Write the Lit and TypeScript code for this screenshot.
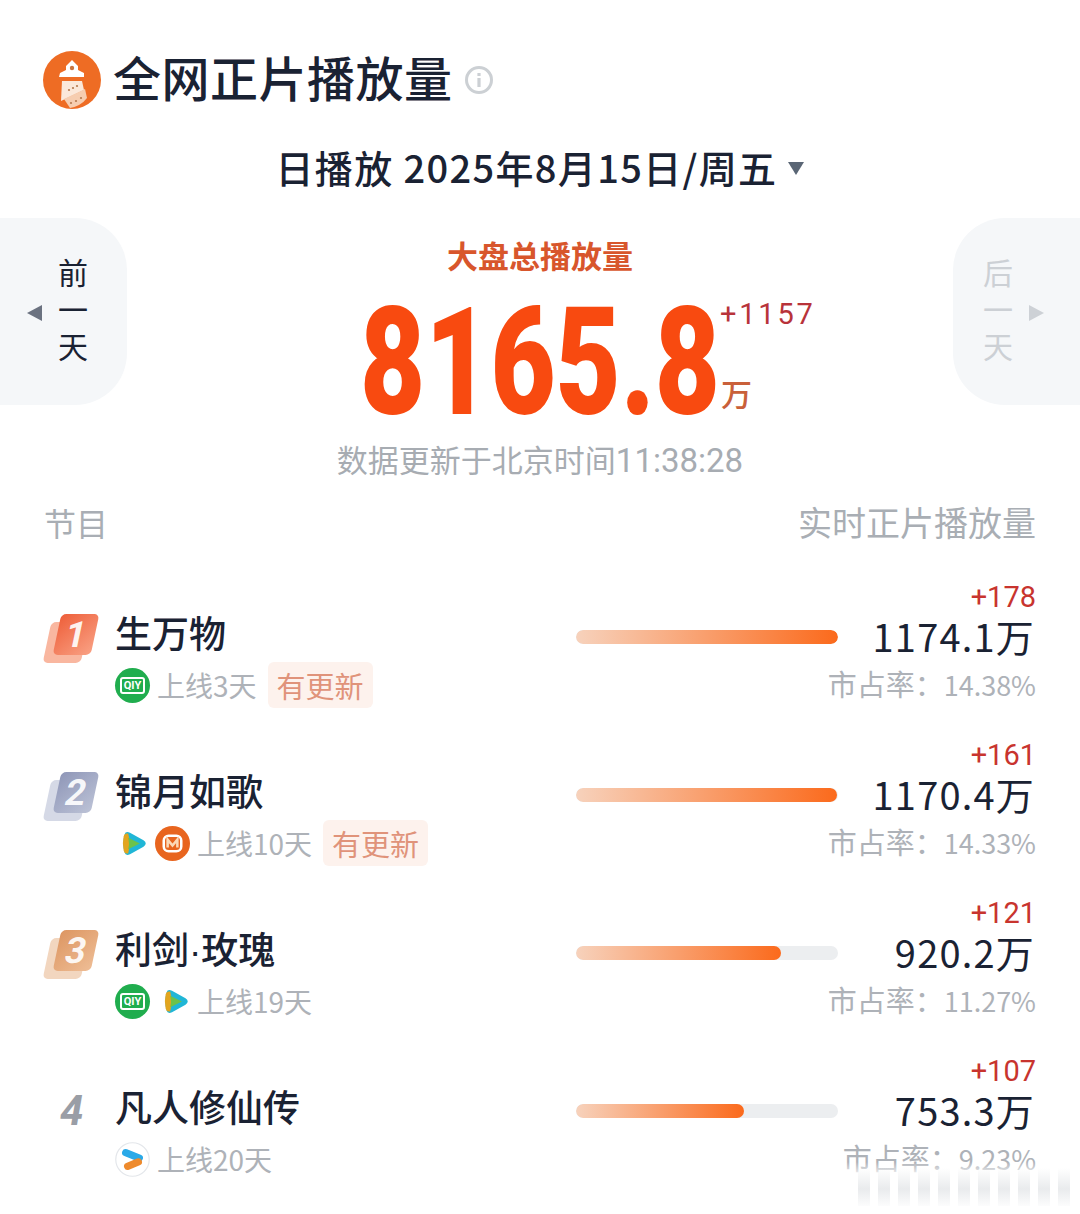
import { LitElement, html, css, svg } from "lit";
import { customElement } from "lit/decorators.js";

type Src = "iqiyi" | "tencent" | "mango" | "youku";
interface Row {
  rank: number; title: string; srcs: Src[]; meta: string; tag: boolean;
  delta: string; value: string; share: string; pct: number;
}

const rows: Row[] = [
  { rank: 1, title: "生万物", srcs: ["iqiyi"], meta: "上线3天", tag: true, delta: "+178", value: "1174.1", share: "14.38%", pct: 100 },
  { rank: 2, title: "锦月如歌", srcs: ["tencent", "mango"], meta: "上线10天", tag: true, delta: "+161", value: "1170.4", share: "14.33%", pct: 99.6 },
  { rank: 3, title: "利剑·玫瑰", srcs: ["iqiyi", "tencent"], meta: "上线19天", tag: false, delta: "+121", value: "920.2", share: "11.27%", pct: 78.4 },
  { rank: 4, title: "凡人修仙传", srcs: ["youku"], meta: "上线20天", tag: false, delta: "+107", value: "753.3", share: "9.23%", pct: 64.2 },
];

const srcIcon = (s: Src) => {
  if (s === "iqiyi")
    return html`<span class="iqiyi"><span class="qiy">QIY</span></span>`;
  if (s === "tencent")
    return html`<svg class="ic-t" viewBox="0 0 30 30">
      <path d="M4 5 Q1 15 4 25 Q5 29 10 27 L25 18.5 Q30 15 25 11.5 L10 3 Q5 1 4 5Z" fill="#20b6d6"/>
      <path d="M3 7 Q1 15 3 23 Q4 27 8 26 Q11 15 8 4 Q4 3 3 7Z" fill="#e2a51f"/>
      <path d="M8 8.5 L21 15 L8 21.5 Q10 15 8 8.5Z" fill="#6cc24a"/>
    </svg>`;
  if (s === "mango")
    return html`<svg class="ic-m" viewBox="0 0 36 36">
      <circle cx="18" cy="18" r="18" fill="#e8651f"/>
      <rect x="9" y="10" width="18" height="16" rx="5" fill="none" stroke="#fff" stroke-width="2.6"/>
      <path d="M13 22 V14 L18 20 L23 14 V22" fill="none" stroke="#fbd9b8" stroke-width="2.6"/>
    </svg>`;
  return html`<svg class="ic-m" viewBox="0 0 36 36">
    <circle cx="18" cy="18" r="17.2" fill="#fff" stroke="#e3e6ea" stroke-width="1.2"/>
    <path d="M11 11 L25 16.5" stroke="#2aa9e8" stroke-width="7.5" stroke-linecap="round"/>
    <path d="M13 25 L24 20.5" stroke="#ee8a2c" stroke-width="7.5" stroke-linecap="round"/>
  </svg>`;
};

const tower = svg`
  <circle cx="29" cy="29" r="29" fill="#ee6c24"/>
  <path d="M17 22 L23 19 L23 15 L29 9 L35 15 L35 19 L41 22 L41 26 L16 26Z" fill="#fff"/>
  <circle cx="29" cy="17" r="2.2" fill="#c9743f"/>
  <path d="M19 30 H39 L41 39 L18 50 Z" fill="#fbe8da"/>
  <path d="M21 48 L42 38 L44 47 Q38 55 27 57 Z" fill="#f6cdb0"/>
  <g fill="#b57a4f"><circle cx="26" cy="39" r="1.1"/><circle cx="30" cy="37" r="1.1"/><circle cx="34" cy="35" r="1.1"/><circle cx="28" cy="52" r="1.1"/><circle cx="33" cy="50" r="1.1"/><circle cx="38" cy="47" r="1.1"/></g>
`;

@customElement("app-root")
export class AppRoot extends LitElement {
  static styles = css`
    :host {
      display: block; width: 1080px; height: 1214px; overflow: hidden; position: relative;
      background: #fff; color: #1a2233;
      font-family: "Noto Sans CJK SC", "Noto Sans", sans-serif;
    }
    .head { display: flex; align-items: center; padding: 50px 0 0 43px; height: 60px; }
    .logo { width: 58px; height: 58px; flex: none; }
    .title { font-size: 48px; line-height: 60px; margin: -8px 0 0 12px; font-weight: 500; white-space: nowrap; letter-spacing: 0.5px; }
    .info { width: 30px; height: 30px; margin-left: 11px; flex: none; }
    .date {
      display: flex; justify-content: center; align-items: center; gap: 11px;
      margin-top: 27px; height: 60px; font-size: 38px; line-height: 50px; font-weight: 500; white-space: nowrap; letter-spacing: 1.35px;
    }
    .date i { display: block; width: 0; height: 0; border: 8px solid transparent; border-top: 13px solid #5a6675; border-bottom: 0; margin-top: 2px; }
    .hero { display: grid; grid-template-columns: 127px 1fr 127px; margin-top: 21px; height: 187px; }
    .side {
      background: #f5f7f9; display: flex; align-items: center; height: 187px;
      justify-content: flex-end; gap: 24px; font-size: 30px; padding-right: 39px; box-sizing: border-box;
    }
    .side.l { border-radius: 0 52px 52px 0; }
    .side.r { border-radius: 52px 0 0 52px; justify-content: flex-start; padding: 0 0 0 30px; color: #ccd0d5; }
    .vert { display: flex; flex-direction: column; width: 30px; line-height: 37px; text-align: center; margin-top: -6px; }
    .tri-l { width: 0; height: 0; border: 8px solid transparent; border-right: 15px solid #6b7280; border-left: 0; margin: 3px -8px 0 0; }
    .tri-r { width: 0; height: 0; border: 8px solid transparent; border-left: 15px solid #cdd1d6; border-right: 0; margin: 3px 0 0 -8px; }
    .mid { display: flex; flex-direction: column; align-items: center; }
    .label { font-size: 31px; line-height: 40px; font-weight: 700; color: #d8562c; margin-top: 17px; }
    .numwrap { position: relative; width: 356px; height: 130px; margin: 21px 0 0 -2px; }
    .num {
      position: absolute; left: -1px; top: -13px; font-family: Roboto, sans-serif; font-weight: 900; font-size: 151px; line-height: 160px;
      color: #f84a10; transform: scaleX(0.745); transform-origin: left top; white-space: nowrap;
    }
    .plus { position: absolute; left: 359px; top: 0; font-size: 29px; line-height: 36px; color: #b8333a; letter-spacing: 2.8px; font-family: Roboto, sans-serif; white-space: nowrap; }
    .wan { position: absolute; left: 360px; top: 77px; font-size: 31px; line-height: 40px; color: #c9603a; font-weight: 500; }
    .updw { display: flex; justify-content: center; margin-top: 34px; }
    .upd { font-size: 31px; line-height: 40px; color: #a7acb2; white-space: nowrap; }
    .upd span { font-family: Roboto, sans-serif; font-size: 33px; }
    .thead { display: flex; justify-content: space-between; padding: 0 44px 0 44px; margin-top: 19px; line-height: 44px; color: #a9aeb4; font-size: 34px; }
    .thead b { font-weight: 400; font-size: 32px; }
    .list { margin-top: 32px; }
    .row { display: grid; grid-template-columns: 72px 460px 262px 198px; padding-left: 44px; height: 158px; box-sizing: border-box; }
    .rank { position: relative; height: 54px; margin-top: 38px; }
    .b { position: absolute; width: 38px; height: 41px; border-radius: 5px; transform: skewX(-12deg); }
    .b1 { left: 3px; top: 8px; }
    .b2 { left: 13px; top: 0; display: flex; align-items: center; justify-content: center; }
    .b2 span { font-size: 36px; font-weight: 700; color: rgba(255,255,255,.92); line-height: 40px; font-family: Roboto, sans-serif; }
    .r1 .b1 { background: #f9b7a0; } .r1 .b2 { background: linear-gradient(135deg, #ee5f3a, #f9a184); }
    .r2 .b1 { background: #d5d9e6; } .r2 .b2 { background: linear-gradient(135deg, #8f97b8, #bcc2d6); }
    .r3 .b1 { background: #f2d6bf; } .r3 .b2 { background: linear-gradient(135deg, #dd9662, #eebd95); }
    .plain { font-family: Roboto, sans-serif; font-weight: 700; font-style: italic; font-size: 42px; line-height: 44px; color: #9a9ea6; padding-left: 16px; margin-top: 39px; }
    .ttl { font-family: "Liberation Sans", "Noto Sans CJK SC", sans-serif; font-size: 37px; line-height: 50px; font-weight: 500; margin: 35px 0 0 -1px; white-space: nowrap; }
    .meta { display: flex; align-items: center; height: 46px; margin: 1px 0 0 -1px; gap: 7px; font-size: 28px; color: #aeb2b8; white-space: nowrap; }
    .iqiyi { width: 35px; height: 35px; border-radius: 50%; background: #20ad4e; display: flex; align-items: center; justify-content: center; flex: none; }
    .qiy { border: 2px solid #fff; border-radius: 3px; font: 700 11px/13px Roboto, sans-serif; color: #fff; padding: 0 2px; }
    .ic-t { width: 27px; height: 27px; margin-left: 6px; flex: none; }
    .ic-m { width: 35px; height: 35px; flex: none; }
    .tag { font-size: 29px; line-height: 46px; height: 46px; padding: 0 9px; background: #fdf2ed; color: #e0937a; border-radius: 6px; margin-left: 4px; }
    .track { width: 262px; height: 14px; border-radius: 7px; background: #eceef0; margin-top: 54px; overflow: hidden; }
    .fill { height: 14px; border-radius: 7px; background: linear-gradient(90deg, #f7d2bc, #fb6a1c); }
    .nums { display: flex; flex-direction: column; align-items: flex-end; white-space: nowrap; }
    .delta { font-family: Roboto, sans-serif; font-size: 29px; line-height: 36px; color: #c8342e; margin-top: 3px; }
    .val { font-size: 38px; line-height: 46px; letter-spacing: 1.2px; padding-right: 1px; margin-top: -2px; }
    .share { font-size: 29px; line-height: 44px; color: #aeb2b8; margin-top: 2px; }
    .share span { font-size: 27px; }
    .wmfade { position: absolute; right: 0; bottom: 0; width: 236px; height: 52px; background: linear-gradient(180deg, rgba(255,255,255,0), #fff 30%); }
    .wm { position: absolute; right: 10px; bottom: 8px; height: 38px; display: flex; gap: 8px; }
    .wm i { display: block; width: 12px; background: linear-gradient(180deg, rgba(232,234,236,0), rgba(232,234,236,.95) 55%, rgba(240,241,243,.2)); }
  `;

  render() {
    return html`
      <div class="head">
        <svg class="logo" viewBox="0 0 58 58">${tower}</svg>
        <div class="title">全网正片播放量</div>
        <svg class="info" viewBox="0 0 30 30">
          <circle cx="15" cy="15" r="12.5" fill="none" stroke="#ccd0d4" stroke-width="3"/>
          <rect x="13.4" y="13" width="3.2" height="9" fill="#ccd0d4"/>
          <rect x="13.4" y="8" width="3.2" height="3" fill="#ccd0d4"/>
        </svg>
      </div>
      <div class="date"><span>日播放 2025年8月15日/周五</span><i></i></div>
      <div class="hero">
        <div class="side l"><span class="tri-l"></span><div class="vert"><span>前</span><span>一</span><span>天</span></div></div>
        <div class="mid">
          <div class="label">大盘总播放量</div>
          <div class="numwrap">
            <div class="num">8165.8</div>
            <div class="plus">+1157</div>
            <div class="wan">万</div>
          </div>
        </div>
        <div class="side r"><div class="vert"><span>后</span><span>一</span><span>天</span></div><span class="tri-r"></span></div>
      </div>
      <div class="updw"><div class="upd">数据更新于北京时间<span>11:38:28</span></div></div>
      <div class="thead"><b>节目</b><span>实时正片播放量</span></div>
      <div class="list">
        ${rows.map((r) => html`
          <div class="row">
            ${r.rank < 4
              ? html`<div class="rank r${r.rank}"><div class="b b1"></div><div class="b b2"><span>${r.rank}</span></div></div>`
              : html`<div class="plain">${r.rank}</div>`}
            <div>
              <div class="ttl">${r.title}</div>
              <div class="meta">
                ${r.srcs.map(srcIcon)}
                <span>${r.meta}</span>
                ${r.tag ? html`<span class="tag">有更新</span>` : ""}
              </div>
            </div>
            <div class="track"><div class="fill" style="width:${r.pct}%"></div></div>
            <div class="nums">
              <div class="delta">${r.delta}</div>
              <div class="val">${r.value}万</div>
              <div class="share">市占率：<span>${r.share}</span></div>
            </div>
          </div>`)}
      </div>
      <div class="wmfade"></div>
      <div class="wm">${[...Array(11)].map(() => html`<i></i>`)}</div>
    `;
  }
}
